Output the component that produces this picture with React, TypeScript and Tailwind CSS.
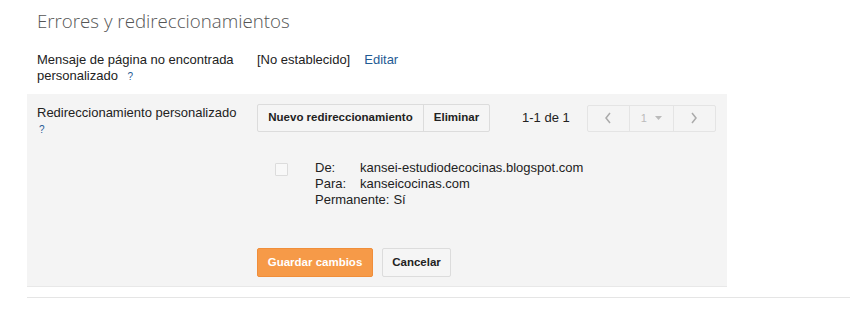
import React from "react";

export default function App() {
  return (
    <div className="w-[850px] h-[310px] bg-white relative overflow-hidden" style={{ fontFamily: '"Liberation Sans", Arial, sans-serif' }}>
      <div className="pl-[37px] pt-[7px] text-[18.7px] text-[#555] font-light" style={{ fontFamily: '"Open Sans", sans-serif' }}>
        Errores y redireccionamientos
      </div>
      <div className="flex pl-[37px] pt-[17px] text-[13px] leading-[16px] text-[#222]">
        <div className="w-[220px]">
          Mensaje de página no encontrada<br />personalizado <span className="ml-[6px] text-[10px] text-[#1f5b94]">?</span>
        </div>
        <div>[No establecido]</div>
        <div className="ml-[14px] text-[#1f5b94]">Editar</div>
      </div>
      <div className="ml-[27px] mt-[9px] w-[700px] h-[193px] bg-[#f4f4f4] border-b border-[#e8e8e8] flex">
        <div className="w-[230px] pl-[10px] pt-[11px] text-[13px] leading-[16px] text-[#222]">
          Redireccionamiento personalizado<br />
          <span className="text-[10px] text-[#1f5b94] ml-[2px]">?</span>
        </div>
        <div className="flex flex-col pt-[10px]">
          <div className="flex items-center">
            <div className="flex h-[28px] border border-[#dcdcdc] rounded-[2px] bg-[#f5f5f5] text-[11.5px] font-bold text-[#222]">
              <div className="w-[166px] flex items-center justify-center border-r border-[#dcdcdc]">Nuevo redireccionamiento</div>
              <div className="w-[65px] flex items-center justify-center">Eliminar</div>
            </div>
            <div className="ml-[32px] text-[13px] text-[#222]">1-1 de 1</div>
            <div className="ml-[17px] flex h-[27px] border border-[#e4e4e4] rounded-[2px] bg-[#f4f4f4]">
              <div className="w-[42px] flex items-center justify-center border-r border-[#e4e4e4]">
                <svg width="8" height="12" viewBox="0 0 8 12"><path d="M6 1 L2 6 L6 11" fill="none" stroke="#aaa" strokeWidth="1.5" /></svg>
              </div>
              <div className="w-[44px] flex items-center justify-center gap-[8px] border-r border-[#e4e4e4] text-[11px] text-[#bbb]">
                <span>1</span>
                <svg width="7" height="4" viewBox="0 0 7 4"><path d="M0 0 L7 0 L3.5 4 Z" fill="#bbb" /></svg>
              </div>
              <div className="w-[41px] flex items-center justify-center">
                <svg width="8" height="12" viewBox="0 0 8 12"><path d="M2 1 L6 6 L2 11" fill="none" stroke="#aaa" strokeWidth="1.5" /></svg>
              </div>
            </div>
          </div>
          <div className="flex mt-[28px] pl-[18px]">
            <div className="w-[13px] h-[13px] mt-[3px] border border-[#dcdcdc] bg-[#f8f8f8] rounded-[1px]" />
            <div className="ml-[27px] text-[13px] leading-[16px] text-[#222]">
              <div className="flex"><span className="w-[45px]">De:</span><span>kansei-estudiodecocinas.blogspot.com</span></div>
              <div className="flex"><span className="w-[45px]">Para:</span><span>kanseicocinas.com</span></div>
              <div className="flex"><span>Permanente:</span><span className="ml-[4px]">Sí</span></div>
            </div>
          </div>
          <div className="flex mt-[40px] gap-[9px]">
            <div className="h-[29px] w-[116px] flex items-center justify-center rounded-[2px] bg-[#f69a48] border border-[#f08e3a] text-white text-[11.5px] font-bold">Guardar cambios</div>
            <div className="h-[29px] w-[69px] flex items-center justify-center rounded-[2px] bg-[#f5f5f5] border border-[#dcdcdc] text-[#222] text-[11.5px] font-bold">Cancelar</div>
          </div>
        </div>
      </div>
      <div className="ml-[27px] mt-[10px] h-[1px] bg-[#e5e5e5]" />
    </div>
  );
}
